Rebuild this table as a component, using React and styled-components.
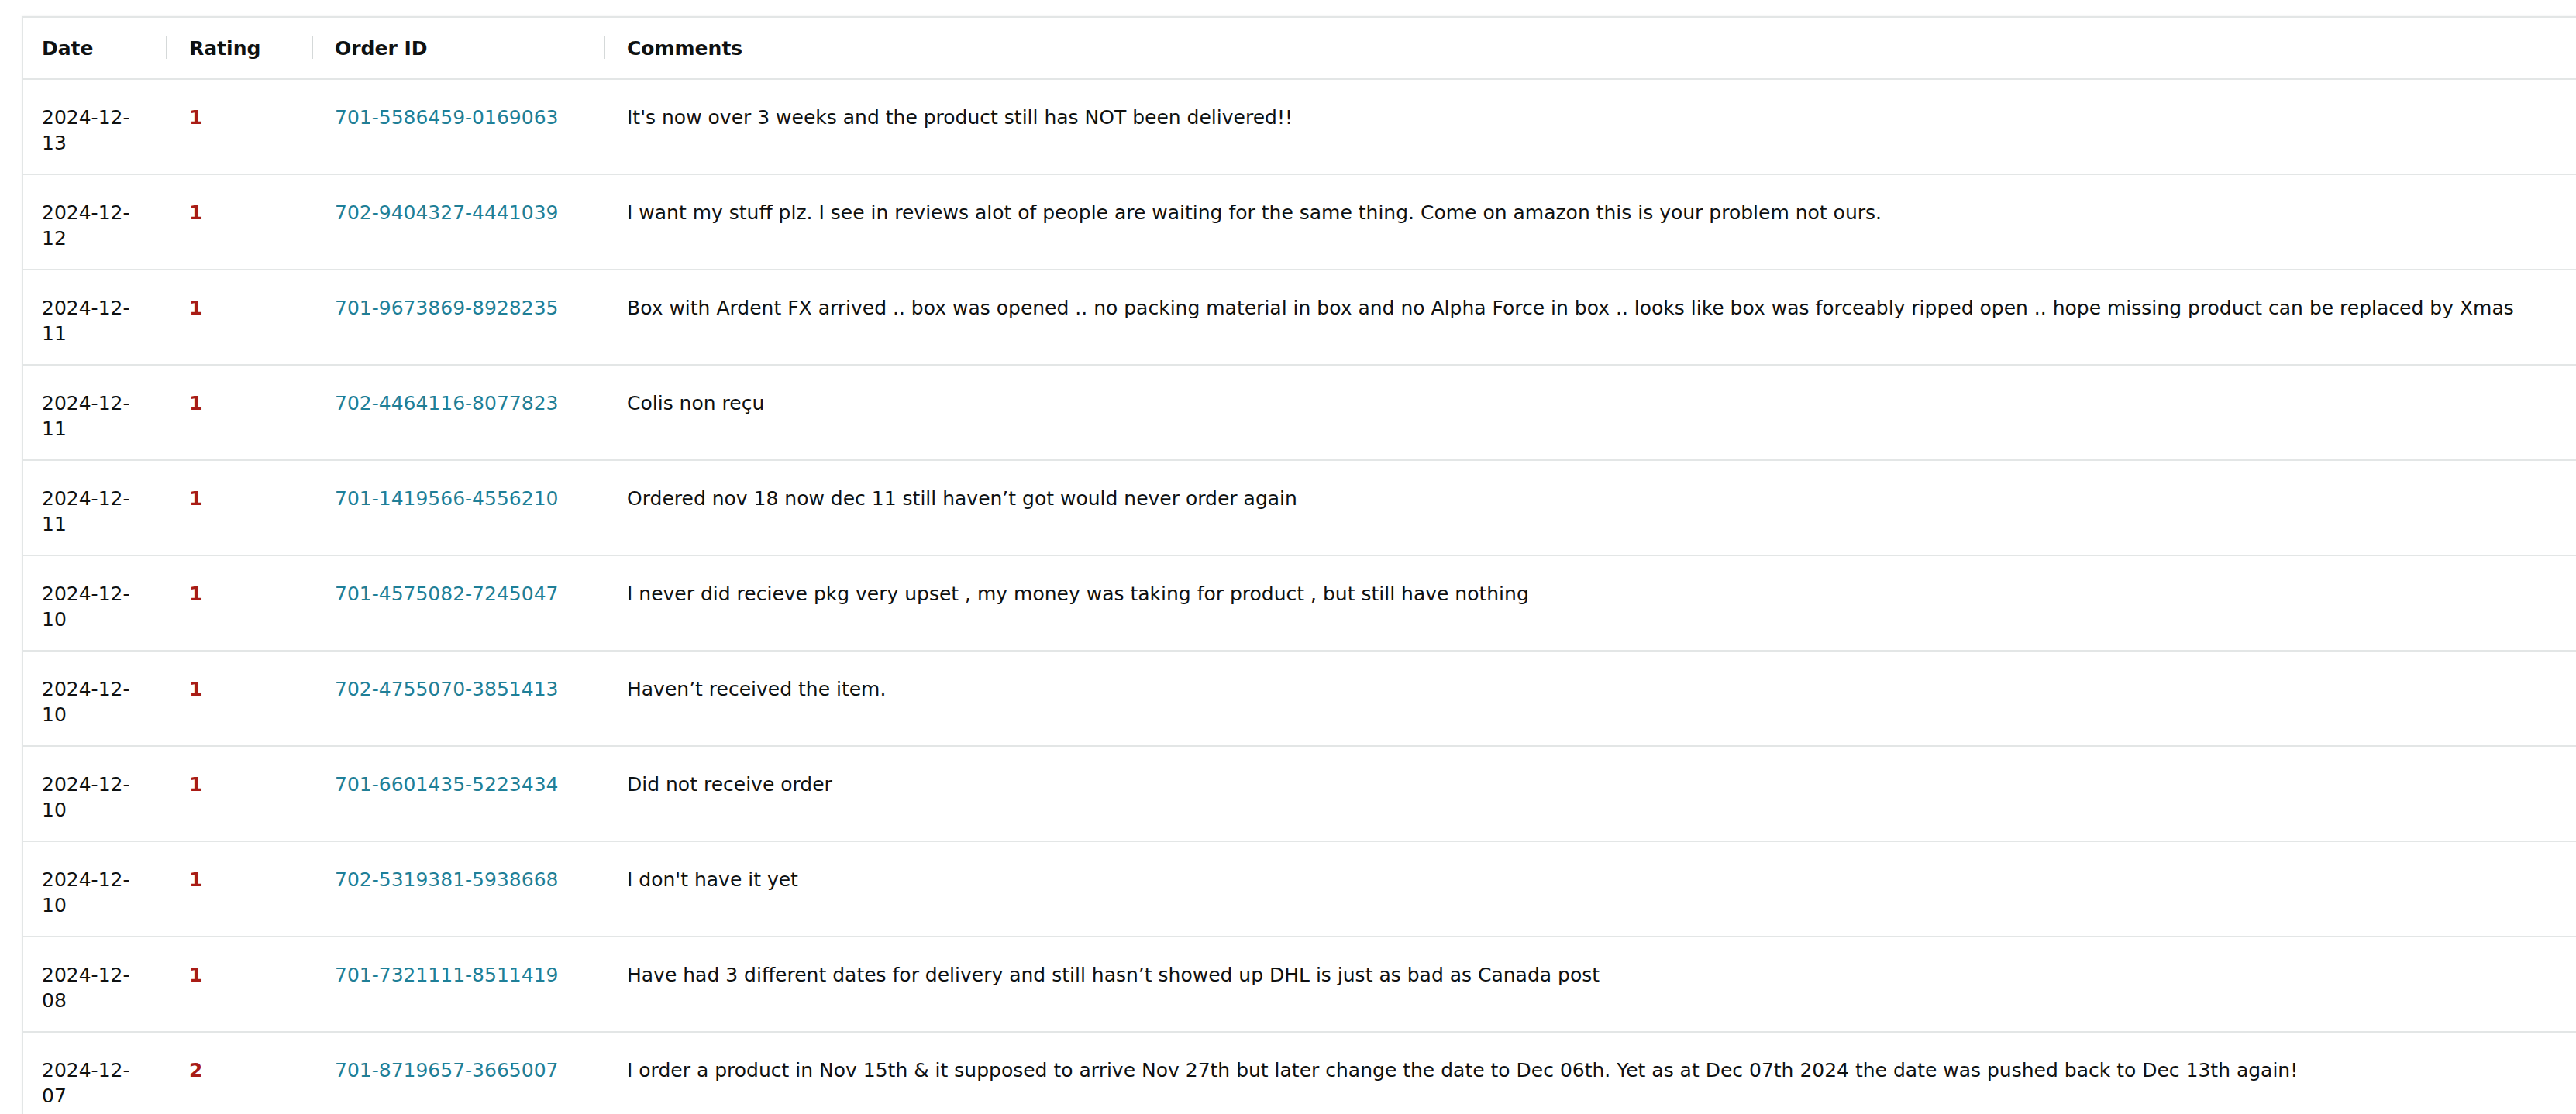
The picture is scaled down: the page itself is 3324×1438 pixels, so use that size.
import React from "react";
import styled, { createGlobalStyle } from "styled-components";

const GlobalStyle = createGlobalStyle`
    body {
        margin: 0;
        background: #fff;
        font-family: "DejaVu Sans", Verdana, sans-serif;
        color: #0f1111;
    }
`;

const Page = styled.div`
    padding: 21px 0 0 28px;
    overflow: hidden;
`;

const Table = styled.table`
    width: calc(100% + 4px);
    border-collapse: collapse;
    table-layout: fixed;
    border: 2px solid #e3e6e6;
    border-right: none;
    box-shadow: 0 -1px 3px rgba(0, 0, 0, 0.04);
    font-size: 25px;
    line-height: 33px;
`;

const HeadCell = styled.th`
    position: relative;
    height: 78px;
    padding: 0 24px 0 ${(p) => (p.$first ? "24px" : "30px")};
    text-align: left;
    vertical-align: middle;
    font-weight: bold;
    color: #0f1111;
    border-bottom: 2px solid #e3e6e6;

    &::before {
        content: "";
        display: ${(p) => (p.$first ? "none" : "block")};
        position: absolute;
        left: 0;
        top: 23px;
        width: 2px;
        height: 30px;
        background: #d5d9d9;
    }
`;

const Row = styled.tr`
    border-bottom: 2px solid #e3e6e6;
`;

const Cell = styled.td`
    padding: 32px 24px 23px ${(p) => (p.$first ? "24px" : "30px")};
    vertical-align: top;
    color: #0f1111;
    word-wrap: break-word;
`;

const Rating = styled.span`
    font-weight: bold;
    color: #a81c16;
`;

const OrderLink = styled.a`
    color: #1f7f97;
    text-decoration: none;
`;

const reviews = [
    { date: "2024-12-13", rating: 1, order: "701-5586459-0169063", text: "It's now over 3 weeks and the product still has NOT been delivered!!" },
    { date: "2024-12-12", rating: 1, order: "702-9404327-4441039", text: "I want my stuff plz. I see in reviews alot of people are waiting for the same thing. Come on amazon this is your problem not ours." },
    { date: "2024-12-11", rating: 1, order: "701-9673869-8928235", text: "Box with Ardent FX arrived .. box was opened .. no packing material in box and no Alpha Force in box .. looks like box was forceably ripped open .. hope missing product can be replaced by Xmas" },
    { date: "2024-12-11", rating: 1, order: "702-4464116-8077823", text: "Colis non reçu" },
    { date: "2024-12-11", rating: 1, order: "701-1419566-4556210", text: "Ordered nov 18 now dec 11 still haven’t got would never order again" },
    { date: "2024-12-10", rating: 1, order: "701-4575082-7245047", text: "I never did recieve pkg very upset , my money was taking for product , but still have nothing" },
    { date: "2024-12-10", rating: 1, order: "702-4755070-3851413", text: "Haven’t received the item." },
    { date: "2024-12-10", rating: 1, order: "701-6601435-5223434", text: "Did not receive order" },
    { date: "2024-12-10", rating: 1, order: "702-5319381-5938668", text: "I don't have it yet" },
    { date: "2024-12-08", rating: 1, order: "701-7321111-8511419", text: "Have had 3 different dates for delivery and still hasn’t showed up DHL is just as bad as Canada post" },
    { date: "2024-12-07", rating: 2, order: "701-8719657-3665007", text: "I order a product in Nov 15th & it supposed to arrive Nov 27th but later change the date to Dec 06th. Yet as at Dec 07th 2024 the date was pushed back to Dec 13th again!" },
];

const App = () => {
    return (
        <Page>
            <GlobalStyle />
            <Table>
                <colgroup>
                    <col style={{ width: 185 }} />
                    <col style={{ width: 188 }} />
                    <col style={{ width: 377 }} />
                    <col />
                </colgroup>
                <thead>
                    <tr>
                        <HeadCell $first>Date</HeadCell>
                        <HeadCell>Rating</HeadCell>
                        <HeadCell>Order ID</HeadCell>
                        <HeadCell>Comments</HeadCell>
                    </tr>
                </thead>
                <tbody>
                    {reviews.map((r) => (
                        <Row key={r.order}>
                            <Cell $first>{r.date}</Cell>
                            <Cell>
                                <Rating>{r.rating}</Rating>
                            </Cell>
                            <Cell>
                                <OrderLink href="#">{r.order}</OrderLink>
                            </Cell>
                            <Cell>{r.text}</Cell>
                        </Row>
                    ))}
                </tbody>
            </Table>
        </Page>
    );
};

export default App;
